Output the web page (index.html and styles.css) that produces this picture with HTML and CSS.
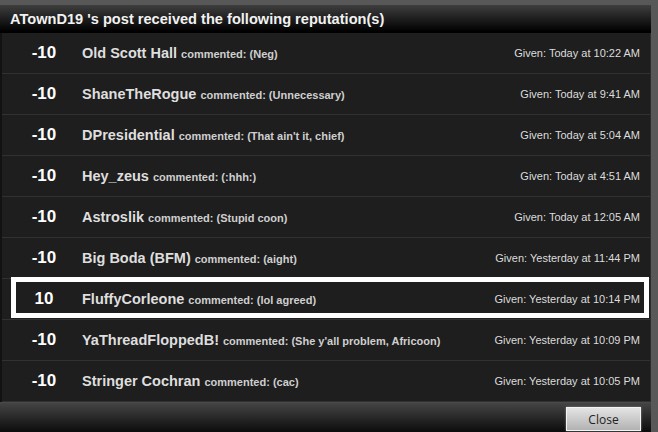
FILE: index.html
```html
<!DOCTYPE html>
<html>
<head>
<meta charset="utf-8">
<link rel="stylesheet" href="styles.css">
</head>
<body>
<div class="dialog">
  <div class="header">ATownD19 's post received the following reputation(s)</div>
  <div class="list">
    <div class="row"><span class="val">-10</span><span class="name">Old Scott Hall</span><span class="cmt">commented: (Neg)</span><span class="given">Given: Today at 10:22 AM</span></div>
    <div class="row"><span class="val">-10</span><span class="name">ShaneTheRogue</span><span class="cmt">commented: (Unnecessary)</span><span class="given">Given: Today at 9:41 AM</span></div>
    <div class="row"><span class="val">-10</span><span class="name">DPresidential</span><span class="cmt">commented: (That ain't it, chief)</span><span class="given">Given: Today at 5:04 AM</span></div>
    <div class="row"><span class="val">-10</span><span class="name">Hey_zeus</span><span class="cmt">commented: (:hhh:)</span><span class="given">Given: Today at 4:51 AM</span></div>
    <div class="row"><span class="val">-10</span><span class="name">Astroslik</span><span class="cmt">commented: (Stupid coon)</span><span class="given">Given: Today at 12:05 AM</span></div>
    <div class="row"><span class="val">-10</span><span class="name">Big Boda (BFM)</span><span class="cmt">commented: (aight)</span><span class="given">Given: Yesterday at 11:44 PM</span></div>
    <div class="row marked"><span class="val">10</span><span class="name">FluffyCorleone</span><span class="cmt">commented: (lol agreed)</span><span class="given">Given: Yesterday at 10:14 PM</span></div>
    <div class="row"><span class="val">-10</span><span class="name">YaThreadFloppedB!</span><span class="cmt">commented: (She y'all problem, Africoon)</span><span class="given">Given: Yesterday at 10:09 PM</span></div>
    <div class="row"><span class="val">-10</span><span class="name">Stringer Cochran</span><span class="cmt">commented: (cac)</span><span class="given">Given: Yesterday at 10:05 PM</span></div>
  </div>
  <div class="footer"><button class="close">Close</button></div>
</div>
</body>
</html>
```
FILE: styles.css
```css
html, body {
  margin: 0;
  padding: 0;
  background: #585858;
  font-family: "Liberation Sans", Arial, sans-serif;
  overflow: hidden;
}
.dialog {
  margin-top: 5px;
  width: 651px;
  display: flex;
  flex-direction: column;
}
.header {
  height: 28px;
  background: linear-gradient(#3e3e3e, #000 95%);
  color: #f2f2f2;
  font-weight: bold;
  font-size: 14.6px;
  display: flex;
  align-items: center;
  padding-left: 10px;
}
.list {
  background: #1e1e1e;
  border-left: 2px solid #121212;
  border-right: 1px solid #2c2c2c;
}
.row {
  height: 40px;
  border-bottom: 1px solid #313131;
  display: flex;
  align-items: center;
  padding-left: 9px;
  padding-right: 10px;
  position: relative;
}
.val {
  width: 66px;
  text-align: center;
  color: #fff;
  font-weight: bold;
  font-size: 17px;
  margin-right: 5px;
}
.name {
  color: #dedede;
  font-weight: bold;
  font-size: 14.5px;
  margin-right: 4px;
}
.cmt {
  color: #cfcfcf;
  font-weight: bold;
  font-size: 11px;
  padding-top: 2px;
}
.given {
  margin-left: auto;
  color: #dcdcdc;
  font-size: 11px;
}
.marked::after {
  content: "";
  position: absolute;
  top: -2px;
  left: 9px;
  right: 1px;
  bottom: 1px;
  border: 5px solid #fff;
}
.footer {
  height: 30px;
  background: linear-gradient(#444, #0c0c0c);
  border-top: 1px solid #4a4a4a;
  box-sizing: border-box;
  display: flex;
  justify-content: flex-end;
  align-items: flex-start;
  padding-right: 10px;
}
.close {
  margin-top: 4px;
  width: 75px;
  height: 24px;
  background: linear-gradient(#e4e4e4, #b2b2b2);
  border: 1px solid #f4f4f4;
  box-shadow: 0 0 2px #888;
  color: #222;
  font-family: "Open Sans", "Noto Sans", sans-serif;
  font-size: 12px;
  padding: 0;
}
```
